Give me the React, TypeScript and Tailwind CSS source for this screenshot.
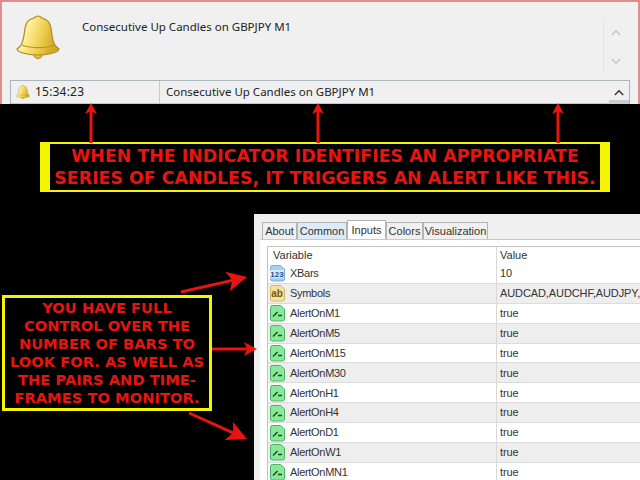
const redText = 'text-[#e8140f]';

function Bell({ id, className }: { id: string; className: string }) {
  return (
    <svg viewBox="0 0 44 46" className={className}>
      <defs>
        <linearGradient id={id} x1="0" y1="0" x2="1" y2="0.3">
          <stop offset="0" stopColor="#ecc93f" />
          <stop offset="0.32" stopColor="#fff09a" />
          <stop offset="0.7" stopColor="#edcd4c" />
          <stop offset="1" stopColor="#d2a825" />
        </linearGradient>
      </defs>
      <circle cx="22" cy="40" r="4.5" fill="#e3bf3f" stroke="#a98a2a" strokeWidth="1" />
      <path
        d="M22 2c-2 0-3 1-4 2-5 1-8 4-9 10-1 7-1 12-4 17-1 2-3 3-4 4 0 1 1 2 3 3 5 2 12 3 18 3s13-1 18-3c2-1 3-2 3-3-1-1-3-2-4-4-3-5-3-10-4-17-1-6-4-9-9-10-1-1-2-2-4-2z"
        fill={`url(#${id})`}
        stroke="#a98a2a"
        strokeWidth="1.2"
      />
      <path d="M6 31c9 3.500 23 3.500 32 0" fill="none" stroke="#b8932a" strokeWidth="1.2" />
    </svg>
  );
}

function Arrow({ x1, y1, x2, y2, len, half }: { x1: number; y1: number; x2: number; y2: number; len: number; half: number }) {
  const a = Math.atan2(y2 - y1, x2 - x1);
  const p = (l: number, s: number) => `${x2 + Math.cos(a) * l - Math.sin(a) * s},${y2 + Math.sin(a) * l + Math.cos(a) * s}`;
  return (
    <g>
      <line x1={x1} y1={y1} x2={x2 - Math.cos(a) * len * 0.7} y2={y2 - Math.sin(a) * len * 0.7} stroke="#e8140f" strokeWidth="3" />
      <polygon points={`${x2},${y2} ${p(-len, half)} ${p(-len * 0.75, 0)} ${p(-len, -half)}`} fill="#e8140f" />
    </g>
  );
}

const DOC = 'M1.500 3.500a2 2 0 0 1 2-2h8l4 3.500v10a2 2 0 0 1-2 2h-10a2 2 0 0 1-2-2z';

function VarIcon({ kind }: { kind: string }) {
  if (kind === 'num') {
    return (
      <svg viewBox="0 0 17 18" className="w-[17px] h-[18px] shrink-0">
        <path d={DOC} fill="#a9cff2" stroke="#7aa9da" />
        <rect x="1" y="6" width="14" height="8" fill="#d8ebfb" />
        <text x="8" y="13" textAnchor="middle" fontSize="8" fontWeight="700" fill="#1d4f8f">123</text>
      </svg>
    );
  }
  if (kind === 'str') {
    return (
      <svg viewBox="0 0 17 18" className="w-[17px] h-[18px] shrink-0">
        <path d={DOC} fill="#f6e39a" stroke="#d3b866" />
        <text x="8" y="13" textAnchor="middle" fontSize="10" fontWeight="700" fill="#6f5a18">ab</text>
      </svg>
    );
  }
  return (
    <svg viewBox="0 0 17 18" className="w-[17px] h-[18px] shrink-0">
      <path d={DOC} fill="#8be89a" stroke="#49b560" />
      <path d="M4 12.500l4.500-4.500M9 11.500h4" fill="none" stroke="#0f4a1c" strokeWidth="1.400" />
    </svg>
  );
}

const rows = [
  { name: 'XBars', value: '10', kind: 'num' },
  { name: 'Symbols', value: 'AUDCAD,AUDCHF,AUDJPY,', kind: 'str' },
  { name: 'AlertOnM1', value: 'true', kind: 'bool' },
  { name: 'AlertOnM5', value: 'true', kind: 'bool' },
  { name: 'AlertOnM15', value: 'true', kind: 'bool' },
  { name: 'AlertOnM30', value: 'true', kind: 'bool' },
  { name: 'AlertOnH1', value: 'true', kind: 'bool' },
  { name: 'AlertOnH4', value: 'true', kind: 'bool' },
  { name: 'AlertOnD1', value: 'true', kind: 'bool' },
  { name: 'AlertOnW1', value: 'true', kind: 'bool' },
  { name: 'AlertOnMN1', value: 'true', kind: 'bool' },
];

const tabs = [
  { label: 'About', w: 'w-[35px]', bg: 'bg-[#f0f0f0]' },
  { label: 'Common', w: 'w-[50px]', bg: 'bg-[#dcebf8]' },
  { label: 'Colors', w: 'w-[37px]', bg: 'bg-[#f0f0f0]' },
  { label: 'Visualization', w: 'w-[65px]', bg: 'bg-[#f0f0f0]' },
];

function Tab({ label, w, bg }: { label: string; w: string; bg: string }) {
  return (
    <div className={`${w} ${bg} h-[17px] pt-px border border-b-0 border-[#b4b4b4] flex items-center justify-center text-[11px] text-[#333]`}>
      {label}
    </div>
  );
}

export default function App() {
  return (
    <div className="relative w-[640px] h-[480px] overflow-hidden bg-black flex flex-col font-['Liberation_Sans',sans-serif]">
      {/* alert window */}
      <div className="h-[104px] shrink-0 bg-[#f0f0f0] border-2 border-b-0 border-[#df8f88] pl-[8px] pr-[8px] flex flex-col">
        <div className="h-[78px] shrink-0 flex">
          <Bell id="bigBell" className="w-[44px] h-[46px] ml-[6px] mt-[12px] shrink-0" />
          <div className="ml-[22px] mt-[17px] text-[11.500px] leading-[16px] text-[#222] font-['Noto_Sans',sans-serif]">
            Consecutive Up Candles on GBPJPY M1
          </div>
          <div className="ml-auto mr-[2px] w-[25px] h-[54px] mt-[18px] border-l border-[#e4e4e4] flex flex-col items-center justify-between text-[#c0c0c0]">
            <svg viewBox="0 0 12 8" className="w-[10px] h-[7px] mt-[9px]"><path d="M1 7l5-5 5 5" fill="none" stroke="currentColor" strokeWidth="1.500" /></svg>
            <svg viewBox="0 0 12 8" className="w-[10px] h-[7px] mb-[9px]"><path d="M1 1l5 5 5-5" fill="none" stroke="currentColor" strokeWidth="1.500" /></svg>
          </div>
        </div>
        <div className="flex-1 flex border border-b-0 border-[#a9b6bd] bg-white">
          <div className="flex-1 h-[23px] flex bg-[#f0f0f0] border-b border-[#c8c8c8] text-[11.500px] text-[#222] font-['Noto_Sans',sans-serif]">
            <div className="w-[149px] flex items-center pl-[5px] border-r border-[#c8c8c8]">
              <Bell id="smallBell" className="w-[14px] h-[16px] shrink-0" />
              <span className="ml-[5px] text-[12px] tracking-[0.2px]">15:34:23</span>
            </div>
            <div className="pl-[6px] flex items-center">Consecutive Up Candles on GBPJPY M1</div>
          </div>
          <div className="w-[20px] bg-[#f0f0f0] flex flex-col items-center">
            <svg viewBox="0 0 12 8" className="w-[10px] h-[7px] mt-[8px] text-[#333]"><path d="M1 7l5-5 5 5" fill="none" stroke="currentColor" strokeWidth="1.800" /></svg>
            <div className="w-full h-[4px] mt-[4px] bg-[#cdcdcd]" />
          </div>
        </div>
      </div>

      {/* top callout */}
      <div className={`ml-[40px] mt-[38px] w-[570px] h-[50px] shrink-0 bg-black border-[#f5f500] border-y-2 border-x-[10px] flex flex-col items-center justify-center font-['DejaVu_Sans',sans-serif] font-bold text-[17.400px] leading-[22px] whitespace-nowrap ${redText}`}>
        <div>WHEN THE INDICATOR IDENTIFIES AN APPROPRIATE</div>
        <div>SERIES OF CANDLES, IT TRIGGERS AN ALERT LIKE THIS.</div>
      </div>

      <div className="flex-1 flex mt-[22px] min-h-0">
        {/* left callout */}
        <div className={`ml-[2px] mt-[81px] w-[210px] h-[116px] shrink-0 border-[3px] border-[#f5f500] flex flex-col items-center justify-center font-['DejaVu_Sans',sans-serif] font-bold text-[14.700px] leading-[18px] whitespace-nowrap ${redText}`}>
          <div>YOU HAVE FULL</div>
          <div>CONTROL OVER THE</div>
          <div>NUMBER OF BARS TO</div>
          <div>LOOK FOR. AS WELL AS</div>
          <div>THE PAIRS AND TIME-</div>
          <div>FRAMES TO MONITOR.</div>
        </div>

        {/* properties dialog */}
        <div className="ml-[42px] flex-1 bg-[#f0f0f0] flex flex-col pl-[6px] min-w-0 overflow-hidden">
          <div className="flex items-end pl-[2px] h-[25px] shrink-0">
            <Tab {...tabs[0]} />
            <Tab {...tabs[1]} />
            <div className="w-[39px] h-[19px] bg-white border border-b-0 border-[#b4b4b4] flex items-center justify-center text-[11px] text-[#333]">
              Inputs
            </div>
            <Tab {...tabs[2]} />
            <Tab {...tabs[3]} />
          </div>
          <div className="flex-1 bg-white border-t border-[#c8c8c8] pl-[7px] pt-[6px] min-h-0">
            <div className="border-t border-l border-[#c4c4c4] text-[11px] text-[#333]">
              <div className="h-[18px] flex items-center border-b border-[#eeeeee]">
                <div className="w-[229px] shrink-0 pl-[5px] border-r border-[#d8d8d8]">Variable</div>
                <div className="pl-[3px]">Value</div>
              </div>
              {rows.map((r, i) => (
                <div key={r.name} className={`h-[19.900px] -translate-y-px flex items-center border-b border-[#dcdcdc] ${i % 2 ? 'bg-[#eeeeee]' : 'bg-white'}`}>
                  <div className="w-[229px] shrink-0 h-full flex items-center pl-[1px] border-r border-[#d8d8d8]">
                    <VarIcon kind={r.kind} />
                    <span className="ml-[4px] tracking-[-0.3px]">{r.name}</span>
                  </div>
                  <div className="pl-[3px] whitespace-nowrap tracking-[-0.1px]">{r.value}</div>
                </div>
              ))}
            </div>
          </div>
        </div>
      </div>

      {/* arrows lying over the page */}
      <svg className="absolute inset-0 w-[640px] h-[480px] pointer-events-none" viewBox="0 0 640 480">
        <Arrow x1={91} y1={143} x2={91} y2={103} len={11} half={6} />
        <Arrow x1={318} y1={143} x2={318} y2={103} len={11} half={6} />
        <Arrow x1={558} y1={143} x2={558} y2={103} len={11} half={6} />
        <Arrow x1={181} y1={292} x2={247} y2={277} len={20} half={10} />
        <Arrow x1={212} y1={349} x2={257} y2={349} len={13} half={7} />
        <Arrow x1={189} y1={413} x2={247} y2={439} len={20} half={10} />
      </svg>
    </div>
  );
}
